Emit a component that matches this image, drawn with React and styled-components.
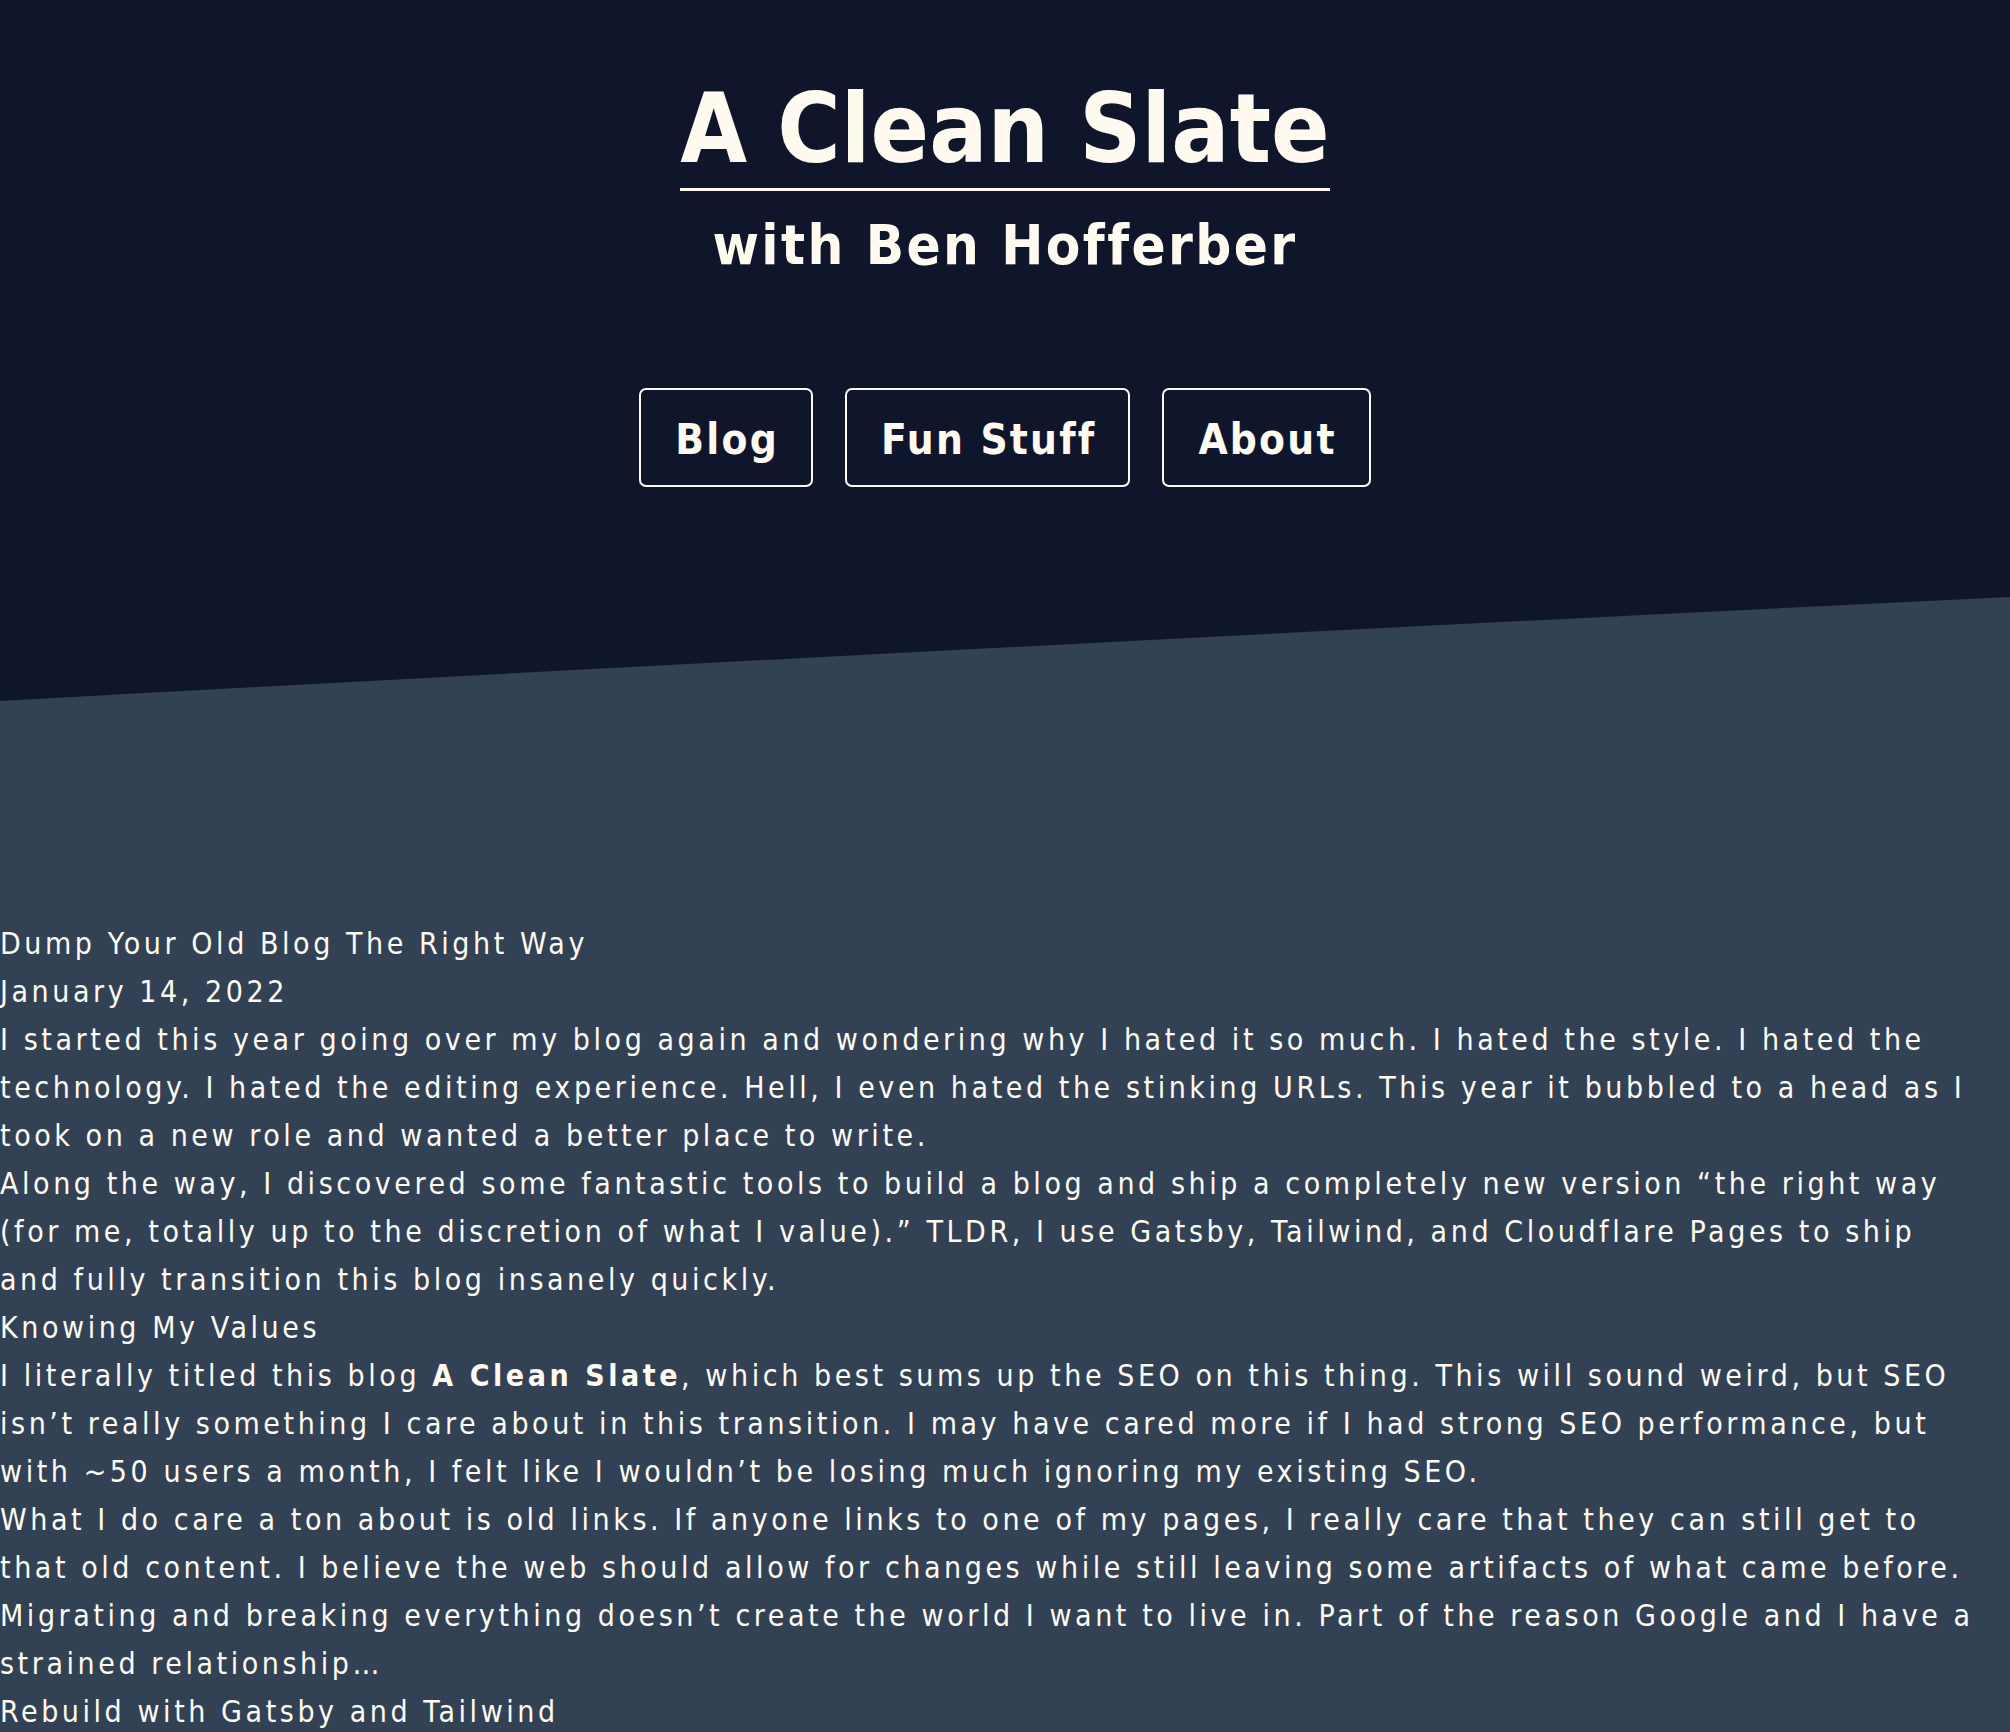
import React from 'react';
import styled, { createGlobalStyle } from 'styled-components';

const FONT = `"DejaVu Sans", "Liberation Sans", sans-serif`;
const CREAM = '#fefaf0';
const NAVY = '#0f162b';
const SLATE = '#334155';

const GlobalStyle = createGlobalStyle`
  html, body {
    margin: 0;
    padding: 0;
    background: ${SLATE};
  }
  body {
    font-family: ${FONT};
    font-stretch: condensed;
    color: ${CREAM};
  }
`;

const Header = styled.header`
  background: ${NAVY};
  display: flex;
  flex-direction: column;
  align-items: center;
  padding: 81px 0 110px;
`;

const Title = styled.h1`
  margin: 0;
  font-size: 96px;
  line-height: 1;
  font-weight: 700;
  letter-spacing: 0.1px;
  padding-bottom: 11px;
  border-bottom: 3px solid ${CREAM};
`;

const Subtitle = styled.h2`
  margin: 26px 0 0;
  font-size: 56px;
  line-height: 1;
  font-weight: 700;
  letter-spacing: 2.4px;
`;

const Nav = styled.nav`
  display: flex;
  gap: 32px;
  margin-top: 115px;
`;

const NavButton = styled.a`
  display: block;
  border: 2px solid ${CREAM};
  border-radius: 7px;
  padding: 18px 32px 14px 34px;
  font-size: 42px;
  line-height: 1.5;
  font-weight: 700;
  letter-spacing: 2.2px;
  color: ${CREAM};
  text-decoration: none;
`;

const Slant = styled.svg`
  display: block;
  width: 100%;
  height: 104px;
`;

const Main = styled.main`
  width: 1978px;
  padding: 219px 0 40px;
`;

const Line = styled.p`
  margin: 0;
  font-size: 30px;
  line-height: 48px;
  font-weight: 400;
  letter-spacing: 3.56px;
`;

const Heading = styled(Line).attrs({ as: 'h3' })``;

const Strong = styled.strong`
  font-weight: 700;
`;

export default function App() {
  return (
    <>
      <GlobalStyle />
      <Header>
        <Title>A Clean Slate</Title>
        <Subtitle>with Ben Hofferber</Subtitle>
        <Nav>
          <NavButton href="#">Blog</NavButton>
          <NavButton href="#">Fun Stuff</NavButton>
          <NavButton href="#">About</NavButton>
        </Nav>
      </Header>
      <Slant viewBox="0 0 2010 104" preserveAspectRatio="none">
        <path d="M0 0 H2010 V0 Q1100 44 0 104 Z" fill={NAVY} />
      </Slant>
      <Main>
        <Heading>Dump Your Old Blog The Right Way</Heading>
        <Line>January 14, 2022</Line>
        <Line>
          I started this year going over my blog again and wondering why I hated it so much. I hated the
          style. I hated the technology. I hated the editing experience. Hell, I even hated the stinking
          URLs. This year it bubbled to a head as I took on a new role and wanted a better place to write.
        </Line>
        <Line>
          Along the way, I discovered some fantastic tools to build a blog and ship a completely new
          version “the right way (for me, totally up to the discretion of what I value).” TLDR, I use
          Gatsby, Tailwind, and Cloudflare Pages to ship and fully transition this blog insanely quickly.
        </Line>
        <Heading>Knowing My Values</Heading>
        <Line>
          I literally titled this blog <Strong>A Clean Slate</Strong>, which best sums up the SEO on this
          thing. This will sound weird, but SEO isn’t really something I care about in this transition. I
          may have cared more if I had strong SEO performance, but with ~50 users a month, I felt like I
          wouldn’t be losing much ignoring my existing SEO.
        </Line>
        <Line>
          What I do care a ton about is old links. If anyone links to one of my pages, I really care that
          they can still get to that old content. I believe the web should allow for changes while still
          leaving some artifacts of what came before. Migrating and breaking everything doesn’t create the
          world I want to live in. Part of the reason Google and I have a strained relationship…
        </Line>
        <Heading>Rebuild with Gatsby and Tailwind</Heading>
      </Main>
    </>
  );
}
